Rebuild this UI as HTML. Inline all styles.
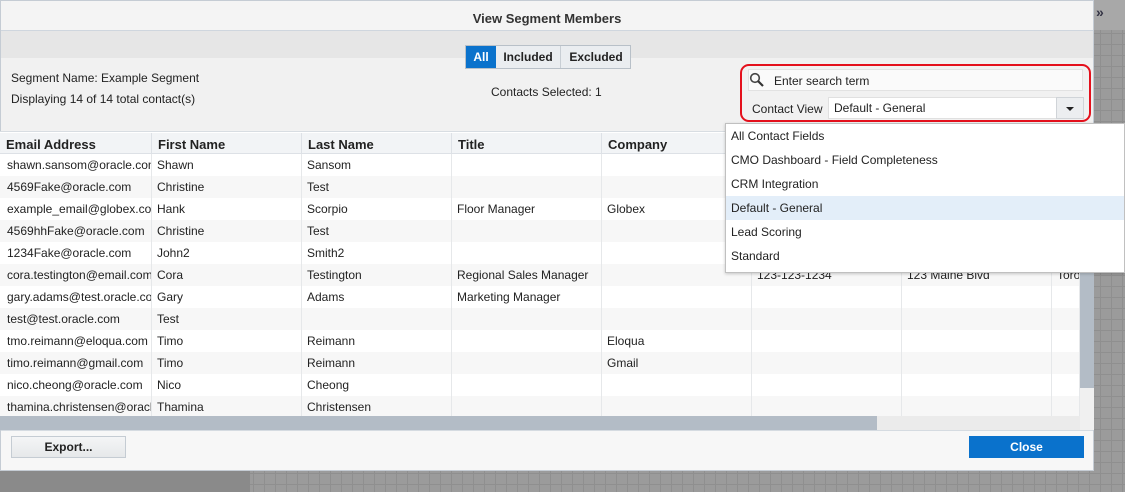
<!DOCTYPE html>
<html><head><meta charset="utf-8"><style>
*{box-sizing:border-box;margin:0;padding:0}
body{width:1125px;height:492px;overflow:hidden;position:relative;font-family:"Liberation Sans",Arial,sans-serif;font-size:12px;color:#222;
background-color:#9b9b9b;background-image:linear-gradient(#8f8f8f 1px,transparent 1px),linear-gradient(90deg,#8f8f8f 1px,transparent 1px);background-size:11px 11px}
.a{position:absolute}
#dlg{left:0;top:0;width:1094px;height:471px;background:#f1f1f1;box-shadow:inset 0 0 0 1px #c5ccd4;overflow:hidden}
.row{position:absolute;left:0;width:1080px;height:22px}
.c{position:absolute;top:0;height:22px;line-height:22px;padding-left:6px;white-space:nowrap;overflow:hidden;font-size:12px;border-right:1px solid #e6e8ea}
.h .c{font-weight:bold;font-size:13px;line-height:24px;height:21px;border-right:1px solid #dde1e6}
.dd div{height:24px;line-height:24px;padding-left:5px;font-size:12px}
</style></head><body>
<div class="a" style="left:0;top:470px;width:250px;height:22px;background:#8a8a8a"></div>
<div class="a" style="left:1094px;top:0;width:31px;height:30px;background:#a8a8a8"></div>
<div class="a" style="left:1096px;top:4px;color:#334;font-size:14px;font-weight:bold">»</div>
<div id="dlg" class="a">
 <div class="a" style="left:1px;top:1px;width:1092px;height:30px;background:#f4f4f4;border-bottom:1px solid #cfd6de;text-align:center;line-height:36px;font-weight:bold;font-size:13px;color:#333">View Segment Members</div>
 <div class="a" style="left:1px;top:31px;width:1092px;height:27px;background:#e6e6e6"></div>
 <div class="a" style="left:465px;top:45px;width:166px;height:24px;border:1px solid #b8c0c8;background:#eaedf0;font-weight:bold;font-size:12px">
  <div class="a" style="left:0;top:0;width:30px;height:22px;background:#0a72cc;color:#fff;text-align:center;line-height:22px">All</div>
  <div class="a" style="left:30px;top:0;width:65px;height:22px;border-right:1px solid #c8ced4;text-align:center;line-height:22px">Included</div>
  <div class="a" style="left:96px;top:0;width:68px;height:22px;text-align:center;line-height:22px">Excluded</div>
 </div>
 <div class="a" style="left:11px;top:71px">Segment Name: Example Segment</div>
 <div class="a" style="left:11px;top:92px">Displaying 14 of 14 total contact(s)</div>
 <div class="a" style="left:491px;top:85px">Contacts Selected: 1</div>
 <div class="a" style="left:740px;top:64px;width:351px;height:58px;border:2px solid #e4101c;border-radius:9px"></div>
 <div class="a" style="left:748px;top:69px;width:335px;height:22px;background:#fafafa;border:1px solid #e2e2e2"></div>
 <svg class="a" style="left:749px;top:72px" width="16" height="16"><circle cx="6" cy="6" r="4.3" fill="none" stroke="#444" stroke-width="1.6"/><line x1="9" y1="9" x2="14" y2="14" stroke="#333" stroke-width="2.2"/></svg>
 <div class="a" style="left:774px;top:74px">Enter search term</div>
 <div class="a" style="left:752px;top:102px">Contact View</div>
 <div class="a" style="left:828px;top:97px;width:256px;height:22px;background:#fff;border:1px solid #e0e0e0"></div>
 <div class="a" style="left:834px;top:101px">Default - General</div>
 <div class="a" style="left:1056px;top:97px;width:28px;height:22px;background:#eceef0;border:1px solid #d0d4d8"></div>
 <div class="a" style="left:1066px;top:107px;border-left:4px solid transparent;border-right:4px solid transparent;border-top:4px solid #222"></div>
 <div class="a" style="left:0;top:131px;width:1094px;height:1px;background:#d8dde2"></div>
 <div class="a" style="left:0;top:132px;width:1080px;height:284px;background:#fff"></div>
 <div class="row h" style="top:133px;height:21px;background:#f2f4f6;border-bottom:1px solid #dde1e6">
  <div class="c" style="left:0;width:152px">Email Address</div><div class="c" style="left:152px;width:150px">First Name</div><div class="c" style="left:302px;width:150px">Last Name</div><div class="c" style="left:452px;width:150px">Title</div><div class="c" style="left:602px;width:150px">Company</div><div class="c" style="left:752px;width:150px"></div><div class="c" style="left:902px;width:150px"></div><div class="c" style="left:1052px;width:40px"></div>
 </div>
 <div id="rows"></div>
 <div class="a" style="left:0;top:416px;width:1080px;height:14px;background:#ebebeb"></div>
 <div class="a" style="left:0;top:416px;width:877px;height:14px;background:#b3bcc6"></div>
 <div class="a" style="left:1080px;top:132px;width:14px;height:298px;background:#f0f0f0"></div>
 <div class="a" style="left:1080px;top:132px;width:14px;height:256px;background:#b3bcc6"></div>
 <div class="a" style="left:1px;top:430px;width:1092px;height:40px;background:#f7f7f7;border-top:1px solid #d5dbe1"></div>
 <div class="a" style="left:11px;top:436px;width:115px;height:22px;border:1px solid #c5ccd3;background:linear-gradient(#f4f5f6,#e6e8ea);text-align:center;line-height:20px;font-weight:bold">Export...</div>
 <div class="a" style="left:969px;top:436px;width:115px;height:22px;background:#0a72cc;color:#fff;text-align:center;line-height:22px;font-weight:bold">Close</div>
</div>
<div class="a dd" style="left:725px;top:123px;width:400px;height:150px;background:#fff;border:1px solid #c0c0c0;box-shadow:0 1px 3px rgba(0,0,0,.2)">
 <div>All Contact Fields</div><div>CMO Dashboard - Field Completeness</div><div>CRM Integration</div><div style="background:#e3eef9">Default - General</div><div>Lead Scoring</div><div>Standard</div>
</div>
<script>
var d=[["shawn.sansom@oracle.com","Shawn","Sansom","",""],["4569Fake@oracle.com","Christine","Test","",""],["example_email@globex.com","Hank","Scorpio","Floor Manager","Globex"],["4569hhFake@oracle.com","Christine","Test","",""],["1234Fake@oracle.com","John2","Smith2","",""],["cora.testington@email.com","Cora","Testington","Regional Sales Manager","","123-123-1234","123 Maine Blvd","Toronto"],["gary.adams@test.oracle.com","Gary","Adams","Marketing Manager",""],["test@test.oracle.com","Test","","",""],["tmo.reimann@eloqua.com","Timo","Reimann","","Eloqua"],["timo.reimann@gmail.com","Timo","Reimann","","Gmail"],["nico.cheong@oracle.com","Nico","Cheong","",""],["thamina.christensen@oracle.com","Thamina","Christensen","",""]];
var L=[0,152,302,452,602,752,902,1052],W=[152,150,150,150,150,150,150,28],h="";
d.forEach(function(r,i){h+='<div class="row" style="top:'+(154+i*22)+'px;background:'+(i%2?'#f7f7f7':'#fff')+'">';
for(var j=0;j<8;j++)h+='<div class="c" style="left:'+L[j]+'px;width:'+W[j]+'px;padding-left:'+(j?5:7)+'px">'+(r[j]||'')+'</div>';h+='</div>';});
document.getElementById('rows').innerHTML=h;
</script>
</body></html>
